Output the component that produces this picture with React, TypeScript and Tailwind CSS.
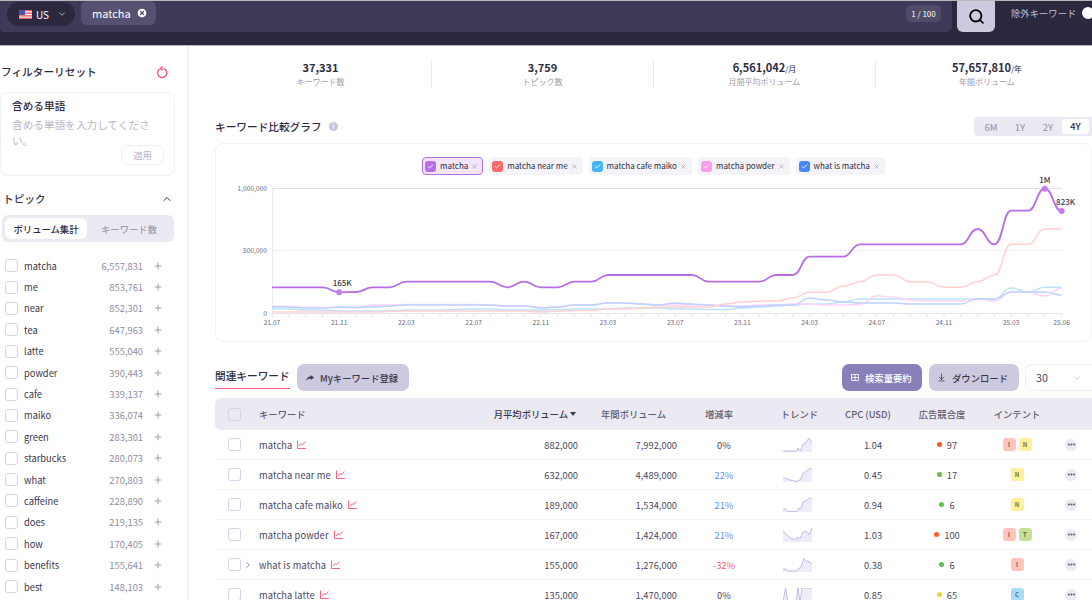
import React from "react";
import { ArrowDownToLine, Check, ChevronDown, ChevronRight, ChevronUp, CircleX, Ellipsis, Plus, Search, X } from "lucide-react";

const topics = [
  ["matcha", "6,557,831"],
  ["me", "853,761"],
  ["near", "852,301"],
  ["tea", "647,963"],
  ["latte", "555,040"],
  ["powder", "390,443"],
  ["cafe", "339,137"],
  ["maiko", "336,074"],
  ["green", "283,301"],
  ["starbucks", "280,073"],
  ["what", "270,803"],
  ["caffeine", "228,890"],
  ["does", "219,135"],
  ["how", "170,405"],
  ["benefits", "155,641"],
  ["best", "148,103"],
];

const chips = [
  { label: "matcha", color: "bg-[#b56ee3]", active: true },
  { label: "matcha near me", color: "bg-[#ff6b6b]" },
  { label: "matcha cafe maiko", color: "bg-[#45b5f7]" },
  { label: "matcha powder", color: "bg-[#ff99ee]" },
  { label: "what is matcha", color: "bg-[#4a86fb]" },
];

const intentColors: Record<string, string> = {
  I: "bg-[#ffc4bd] text-[#8a4b45]",
  N: "bg-[#fff09a] text-[#7d7434]",
  T: "bg-[#c6e09a] text-[#52692c]",
  C: "bg-[#a8dcf5] text-[#3d6e87]",
};

const rows = [
  { kw: "matcha", vol: "882,000", year: "7,992,000", rate: "0%", rateColor: "text-[#4b485c]", cpc: "1.04", dot: "bg-[#ff5b24]", comp: "97", intents: ["I", "N"], trend: "0,13 14,13 15,10 17.5,13 20,6 23,4.5 26,0 29,5" },
  { kw: "matcha near me", vol: "632,000", year: "4,489,000", rate: "22%", rateColor: "text-[#5c92f5]", cpc: "0.45", dot: "bg-[#5cc04a]", comp: "17", intents: ["N"], trend: "0,10 3,10 7,12 14,13.5 18,11 20,5 23,3.5 26,1 29,0" },
  { kw: "matcha cafe maiko", vol: "189,000", year: "1,534,000", rate: "21%", rateColor: "text-[#5c92f5]", cpc: "0.94", dot: "bg-[#5cc04a]", comp: "6", intents: ["N"], trend: "0,11 3,11 5,13.5 14,13.5 15,11 18,10 20,4 23,3 26,0 29,0" },
  { kw: "matcha powder", vol: "167,000", year: "1,424,000", rate: "21%", rateColor: "text-[#5c92f5]", cpc: "1.03", dot: "bg-[#ff5b24]", comp: "100", intents: ["I", "T"], trend: "0,3 5,8 9,11 14,11 15,9 17,11 20,4 23,3 26,7 29,0" },
  { kw: "what is matcha", vol: "155,000", year: "1,276,000", rate: "-32%", rateColor: "text-[#f4587a]", cpc: "0.38", dot: "bg-[#5cc04a]", comp: "6", intents: ["I"], trend: "0,11 3,11 5,13 14,13 15,11 18,9 21,0.5 23,3 27,4 29,6", expand: true },
  { kw: "matcha latte", vol: "135,000", year: "1,470,000", rate: "0%", rateColor: "text-[#4b485c]", cpc: "0.85", dot: "bg-[#fbcf33]", comp: "65", intents: ["C"], trend: "0,14 2.5,0 5,14 13,14 15,0 17,14 19,0 29,0" },
];

// chart lines: y pixel per month, 48 months from 21.07 to 25.06
const purple = [287.3, 287.3, 287.3, 287.3, 292.3, 292, 287.3, 287.3, 281.7, 281.7, 281.7, 281.7, 281.7, 281.7, 287.3, 281.7, 287.3, 287.3, 281.7, 281.7, 275, 275, 275, 275, 275, 275, 281.7, 281.7, 281.7, 281.7, 275, 275, 256.7, 256.7, 256.7, 244.3, 244.3, 244.3, 244.3, 244.3, 244.3, 244.3, 229, 244.3, 210.7, 210.7, 188.7, 211];
const red = [312, 312, 312, 312, 312, 312, 312, 311.5, 311, 311, 311, 311, 311, 311, 311, 311, 312, 311, 310.5, 310.5, 309, 309, 308, 307, 307, 307, 307, 304, 302, 301, 301, 298, 292.3, 292.3, 286, 281.7, 275, 275, 281.7, 281.7, 287.3, 287.3, 281.7, 275, 244.3, 244.3, 229, 229];
const sky = [309, 309, 310, 310, 311, 311, 311, 311, 310, 310, 310, 309.5, 309, 309, 310, 310, 310, 309.5, 309, 309, 309, 308, 308, 308, 309, 309, 309.5, 309.5, 308, 307, 306, 305, 304, 304, 302, 299, 299, 299, 299, 299, 299, 299, 299, 299, 288, 292, 287.3, 287.3];
const pink = [306.3, 306.3, 307.5, 307.5, 307.5, 307.5, 305, 305, 304.5, 304.5, 304.5, 304.5, 304.5, 305, 306, 306, 307.5, 307, 305, 305, 303, 303, 304, 305, 305, 305, 305, 306, 306, 305, 305, 304, 304, 305, 305, 304.5, 295.7, 297, 300, 301, 301, 301, 299, 301, 292, 292, 296, 288];
const blue = [307, 307, 308, 308, 307, 307.5, 307, 306, 305, 305, 305, 305, 305, 305, 306, 306, 308, 307, 305, 305, 303, 303, 304, 305, 303, 304, 305, 306, 307, 306, 305, 305, 298, 300, 302, 303, 303, 303, 304, 304, 304, 304, 299, 299, 292, 292, 292, 295];

const monthX = (m: number) => 56 + m * 16.8;

// smooth line through the points, flat at the plateaus
const linePath = (ys: number[]) => {
  let d = `M${monthX(0)},${ys[0] - 144}`;
  for (let i = 1; i < ys.length; i++) {
    const x0 = monthX(i - 1);
    const x1 = monthX(i);
    const c = (x1 - x0) * 0.5;
    d += ` C${x0 + c},${ys[i - 1] - 144} ${x1 - c},${ys[i] - 144} ${x1},${ys[i] - 144}`;
  }
  return d;
};

const labels = [
  [0, "21.07"], [4, "21.11"], [8, "22.03"], [12, "22.07"], [16, "22.11"], [20, "23.03"],
  [24, "23.07"], [28, "23.11"], [32, "24.03"], [36, "24.07"], [40, "24.11"], [44, "25.03"], [47, "25.06"],
] as const;

function Chart() {
  return (
    <svg width="877" height="195" viewBox="0 0 877 195" className="block" fontFamily="'Noto Sans CJK JP', sans-serif">
      <line x1="56" x2="846" y1="44.5" y2="44.5" stroke="#e2def4" />
      <line x1="56" x2="846" y1="106.5" y2="106.5" stroke="#efedf7" />
      <line x1="56" x2="846" y1="169.5" y2="169.5" stroke="#e6e3f3" />
      <line x1="56.5" x2="56.5" y1="44" y2="173" stroke="#ece9f6" />
      {Array.from({ length: 48 }).map((_, i) => (
        <line key={i} x1={monthX(i)} x2={monthX(i)} y1="169" y2="173" stroke="#e6e3f3" />
      ))}
      <text x="51" y="47" textAnchor="end" fontSize="6.67" fill="#6c697b">1,000,000</text>
      <text x="51" y="109" textAnchor="end" fontSize="6.67" fill="#6c697b">500,000</text>
      <text x="51" y="172" textAnchor="end" fontSize="6.67" fill="#6c697b">0</text>
      {labels.map(([m, t]) => (
        <text key={t} x={monthX(m)} y="181" textAnchor="middle" fontSize="6.67" fill="#6c697b">{t}</text>
      ))}
      <path d={linePath(sky)} fill="none" stroke="#bde3fb" strokeWidth="1.4" />
      <path d={linePath(pink)} fill="none" stroke="#ffd3f6" strokeWidth="1.4" />
      <path d={linePath(blue)} fill="none" stroke="#bdd3fd" strokeWidth="1.4" />
      <path d={linePath(red)} fill="none" stroke="#ffd0cf" strokeWidth="1.4" />
      <path d={linePath(purple)} fill="none" stroke="#b56ee3" strokeWidth="1.8" />
      <circle cx={monthX(4)} cy="148.3" r="3" fill="#c27fe8" />
      <circle cx={monthX(46)} cy="44.7" r="3" fill="#c27fe8" />
      <circle cx={monthX(47)} cy="67" r="3" fill="#c27fe8" />
      <text x={monthX(4) + 3} y="142" textAnchor="middle" fontSize="8" fontWeight="500" fill="#3a374a">165K</text>
      <text x={monthX(46)} y="39" textAnchor="middle" fontSize="8" fontWeight="500" fill="#3a374a">1M</text>
      <text x={monthX(47) + 4} y="61" textAnchor="middle" fontSize="8" fontWeight="500" fill="#3a374a">823K</text>
    </svg>
  );
}

function Spark({ points }: { points: string }) {
  return (
    <svg width="30" height="14" viewBox="0 0 30 14" className="block">
      <polygon points={`0,14 ${points} 29,14`} fill="#efecf9" />
      <polyline points={points} fill="none" stroke="#b7aedb" strokeWidth="0.8" />
    </svg>
  );
}

function TrendIcon() {
  return (
    <svg width="9" height="9" viewBox="0 0 9 9" fill="none" stroke="#f4587a" strokeWidth="0.9" className="shrink-0">
      <path d="M0.5 0.5 V8.5 H9" />
      <path d="M2 6 L4 3.6 L5.6 4.8 L8.4 1.6" />
    </svg>
  );
}

function Box() {
  return <div className="w-[13px] h-[13px] shrink-0 rounded-[3px] border border-[#d5d1ea] bg-white" />;
}

export default function App() {
  return (
    <div className="w-[1092px] h-[600px] overflow-hidden bg-white text-[#2e2b3f] flex flex-col font-['Noto_Sans_CJK_JP','Noto_Sans',sans-serif]">
      {/* Search header */}
      <header className="h-[46px] shrink-0 overflow-hidden bg-[#2b2840] border-t border-b border-t-[#b9b8bf] border-b-[#b9b8bf] flex items-start">
        <div className="w-[952px] shrink-0 h-[31px] bg-[#3f3a57] rounded-br-[6px] rounded-bl-[4px] flex items-start pl-[7px] pr-[11px]">
          <div className="w-[68px] h-[24px] mt-[1px] rounded-full bg-[#2b2840] flex items-center pl-[12px] gap-[4px] text-white text-[10px]">
            <svg width="13" height="9" viewBox="0 0 13 9" className="shrink-0">
              <rect width="13" height="9" fill="#f0f0f4" />
              <rect y="0" width="13" height="1.3" fill="#e85a62" />
              <rect y="2.6" width="13" height="1.3" fill="#e85a62" />
              <rect y="5.2" width="13" height="1.3" fill="#e85a62" />
              <rect y="7.7" width="13" height="1.3" fill="#e85a62" />
              <rect width="6" height="5" fill="#4a55a8" />
            </svg>
            <span>US</span>
            <ChevronDown className="w-[10px] h-[10px] ml-[4px] text-[#c9c7d6]" />
          </div>
          <div className="ml-[6px] w-[75px] h-[24px] rounded-[6px] bg-[#565170] flex items-center pl-[11px] gap-[5px] text-white text-[11px]">
            <span>matcha</span>
            <CircleX className="w-[12px] h-[12px] fill-white text-[#565170]" strokeWidth={2.5} />
          </div>
          <div className="ml-auto mt-[4px] w-[35px] h-[17px] rounded-[5px] bg-[#504b68] flex items-center justify-center text-[8px] text-white">1 / 100</div>
        </div>
        <div className="ml-[5px] w-[38px] shrink-0 h-[31px] rounded-b-[6px] bg-[#cdcae0] flex items-center justify-center">
          <Search className="w-[17px] h-[17px] text-black" strokeWidth={2.6} />
        </div>
        <span className="ml-[16px] mt-[5px] shrink-0 text-[9.33px] text-[#c5c2d5] whitespace-nowrap">除外キーワード</span>
        <div className="ml-[6px] mt-[6px] w-[12px] h-[12px] shrink-0 rounded-full bg-white" />
      </header>

      <div className="flex-1 min-h-0 flex">
        {/* Sidebar */}
        <aside className="w-[189px] shrink-0 border-r-2 border-[#f3f3f8] pt-[18px]">
          <div className="flex items-center justify-between pl-[1px] pr-[19px] h-[16px]">
            <span className="text-[10.67px] font-medium leading-none">フィルターリセット</span>
            <svg width="12" height="13" viewBox="0 0 12 13" fill="none" stroke="#f4587a" strokeWidth="1.4">
              <path d="M3.6 3.1 A4.6 4.6 0 1 0 7.5 2.5" />
              <path d="M6.6 0.4 L4.4 2.5 L6.6 4.4" />
            </svg>
          </div>
          <div className="mt-[12px] w-[175px] h-[84px] rounded-[8px] border border-[#f0eff5] pl-[11px] pr-[10px] pt-[5px]">
            <div className="text-[10.67px] font-medium leading-[16px]">含める単語</div>
            <div className="mt-[3px] text-[10.67px] leading-[16px] text-[#bab7c9]">含める単語を入力してください。</div>
            <div className="flex justify-end -mt-[4px]">
              <div className="w-[43px] h-[20px] rounded-[7px] border border-[#eeedf3] flex items-center justify-center text-[9.33px] text-[#bab7c9]">適用</div>
            </div>
          </div>
          <div className="mt-[15px] flex items-center justify-between pl-[3px] pr-[14px] h-[16px]">
            <span className="text-[10.67px] font-medium leading-none text-[#3a374a]">トピック</span>
            <ChevronUp className="w-[12px] h-[12px]" />
          </div>
          <div className="mt-[8px] ml-[2px] w-[172px] h-[27px] rounded-[6px] bg-[#ebeaf2] flex items-center p-[3px] text-[9.33px]">
            <div className="w-[82px] h-[21px] rounded-[6px] bg-white flex items-center justify-center font-medium">ボリューム集計</div>
            <div className="flex-1 text-center font-medium text-[#9f9cae]">キーワード数</div>
          </div>
          <div className="mt-[13px] ml-[5px] w-[158px]">
            {topics.map(([name, count]) => (
              <div key={name} className="h-[21.4px] flex items-center text-[9.33px]">
                <Box />
                <span className="ml-[6px] flex-1 text-[#3a374a]">{name}</span>
                <span className="text-[#8f8ca0]">{count}</span>
                <Plus className="ml-[10px] w-[10px] h-[10px] text-[#8f8ca0]" />
              </div>
            ))}
          </div>
        </aside>

        {/* Main */}
        <main className="flex-1 min-w-0 pl-[26px]">
          <div className="-ml-[5px] w-[888px] mt-[14px] grid grid-cols-4 items-center">
            {[
              ["37,331", "", "キーワード数"],
              ["3,759", "", "トピック数"],
              ["6,561,042", "/月", "月間平均ボリューム"],
              ["57,657,810", "/年", "年間ボリューム"],
            ].map(([num, unit, label], i) => (
              <div key={label} className={`h-[28px] flex flex-col items-center justify-center ${i < 3 ? "border-r border-[#ebeaf2]" : ""}`}>
                <div className="text-[11px] font-bold leading-[14px]">
                  {num}
                  <span className="text-[8px] font-normal">{unit}</span>
                </div>
                <div className="text-[8px] leading-[12px] text-[#9f9cae]">{label}</div>
              </div>
            ))}
          </div>

          <div className="mt-[29px] h-[19px] flex items-center">
            <span className="text-[10.67px] font-medium">キーワード比較グラフ</span>
            <span className="ml-[7px] w-[9px] h-[9px] rounded-full bg-[#c9c6dc] flex items-center justify-center text-[6px] font-bold text-white leading-none">i</span>
            <div className="ml-auto w-[118px] h-[19px] rounded-l-[4px] bg-[#ebeaf2] flex items-center px-[2px] text-[9.33px] font-medium text-[#9f9cae]">
              <span className="w-[30px] text-center">6M</span>
              <span className="w-[28px] text-center">1Y</span>
              <span className="w-[28px] text-center">2Y</span>
              <span className="w-[27px] h-[15px] leading-[15px] rounded-[3px] bg-white text-center text-[#2e2b3f]">4Y</span>
            </div>
          </div>

          <div className="relative mt-[7px] h-[199px] rounded-[8px] border border-[#f3f2f7]">
            <div className="flex justify-center gap-[6px] pt-[13px]">
              {chips.map((c) => (
                <div
                  key={c.label}
                  className={`h-[18px] rounded-[4px] flex items-center gap-[3px] text-[8px] whitespace-nowrap ${c.active ? "pl-[2px] pr-[4px] bg-[#f3e6fa] border border-[#b56ee3]" : "pl-[3px] pr-[5px] bg-[#f3f3f8]"}`}
                >
                  <span className={`w-[11px] h-[11px] mr-[1px] rounded-[3px] flex items-center justify-center ${c.color}`}>
                    <Check className="w-[7px] h-[7px] text-white" strokeWidth={3} />
                  </span>
                  <span>{c.label}</span>
                  <X className="w-[7px] h-[7px] text-[#8f8ca0]" />
                </div>
              ))}
            </div>
            <div className="absolute left-0 top-0 pointer-events-none">
              <Chart />
            </div>
          </div>

          <div className="mt-[22px] h-[27px] flex items-center">
            <div className="w-[75px] h-[25px] mt-[-2px] border-b-[1.5px] border-[#f4587a] text-[10.67px] font-medium flex items-center whitespace-nowrap">関連キーワード</div>
            <div className="ml-[7px] w-[112px] h-[27px] rounded-[7px] bg-[#cdcae0] flex items-center pl-[9px] gap-[6px] text-[9.33px] font-medium text-[#3a374a]">
              <svg width="8" height="6" viewBox="0 0 8 6" fill="#3a374a" className="shrink-0">
                <path d="M4.6 0 L8 2.6 L4.6 5 V3.4 C2.8 3.4 1.4 4 0 5.6 C0.6 3.2 2.2 1.8 4.6 1.6 Z" />
              </svg>
              <span>Myキーワード登録</span>
            </div>
            <div className="ml-auto w-[80px] h-[27px] rounded-[7px] bg-[#8880b8] flex items-center pl-[9px] gap-[6px] text-[9.33px] font-medium text-white">
              <svg width="8" height="7" viewBox="0 0 8 7" fill="none" stroke="white" strokeWidth="0.8" className="shrink-0">
                <rect x="0.5" y="0.5" width="7" height="6" />
                <path d="M0.5 3.5 H7.5 M4 0.5 V6.5" />
              </svg>
              <span>検索量要約</span>
            </div>
            <div className="ml-[7px] w-[90px] h-[27px] rounded-[7px] bg-[#cdcae0] flex items-center pl-[8px] gap-[6px] text-[9.33px] font-medium text-[#3a374a]">
              <ArrowDownToLine className="w-[9px] h-[9px]" />
              <span>ダウンロード</span>
            </div>
            <div className="ml-[6px] w-[67px] h-[27px] rounded-l-[7px] border border-r-0 border-[#efeef5] flex items-center pl-[10px] text-[10.67px] text-[#4b485c]">
              30
              <ChevronDown className="ml-auto mr-[10px] w-[10px] h-[10px] text-[#c9c6dc]" />
            </div>
          </div>

          {/* Keyword table */}
          <div className="mt-[7px]">
            <div className="h-[32px] rounded-l-[6px] bg-[#ebeaf2] flex items-center text-[9.33px] font-medium text-[#5f5c70] whitespace-nowrap">
              <div className="w-[44px] pl-[13px]"><div className="w-[13px] h-[13px] rounded-[3px] border border-[#d5d1ea]" /></div>
              <div className="w-[219px]">キーワード</div>
              <div className="w-[100px] pr-[2px] text-[#3a374a] flex justify-end items-center gap-[2px]">
                月平均ボリューム
                <svg width="6" height="4" viewBox="0 0 6 4" fill="#3a374a"><path d="M0 0 H6 L3 4 Z" /></svg>
              </div>
              <div className="w-[99px] text-right pr-[11px]">年間ボリューム</div>
              <div className="w-[94px] text-center pr-[10px]">増減率</div>
              <div className="w-[57px] text-center">トレンド</div>
              <div className="w-[90px] text-center pr-[10px]">CPC (USD)</div>
              <div className="w-[58px] text-center pr-[10px]">広告競合度</div>
              <div className="w-[82px] text-center">インテント</div>
            </div>
            {rows.map((r) => (
              <div key={r.kw} className="h-[30px] border-b border-[#f3f2f7] flex items-center text-[9.33px] text-[#4b485c]">
                <div className="w-[44px] pl-[13px] flex items-center">
                  <Box />
                  {r.expand && <ChevronRight className="ml-[2px] w-[10px] h-[10px] text-[#77748a]" />}
                </div>
                <div className="w-[219px] flex items-center gap-[5px]">
                  <span className="tracking-[0.1px]">{r.kw}</span>
                  <TrendIcon />
                </div>
                <div className="w-[100px] text-right">{r.vol}</div>
                <div className="w-[99px] text-right">{r.year}</div>
                <div className={`w-[94px] text-center ${r.rateColor}`}>{r.rate}</div>
                <div className="w-[57px] flex justify-center pr-[4px]"><Spark points={r.trend} /></div>
                <div className="w-[90px] text-center">{r.cpc}</div>
                <div className="w-[58px] flex items-center justify-center gap-[5px]">
                  <span className={`w-[5px] h-[5px] rounded-full ${r.dot}`} />
                  <span>{r.comp}</span>
                </div>
                <div className="w-[82px] flex items-center justify-center gap-[3px]">
                  {r.intents.map((t) => (
                    <span key={t} className={`w-[13px] h-[13px] rounded-[3px] flex items-center justify-center text-[6px] font-bold ${intentColors[t]}`}>{t}</span>
                  ))}
                </div>
                <div className="w-[26px] flex justify-center">
                  <span className="w-[12px] h-[12px] rounded-full bg-[#ebeaf2] flex items-center justify-center">
                    <Ellipsis className="w-[9px] h-[9px] text-[#4b485c]" strokeWidth={3} />
                  </span>
                </div>
              </div>
            ))}
          </div>
        </main>
      </div>
    </div>
  );
}
